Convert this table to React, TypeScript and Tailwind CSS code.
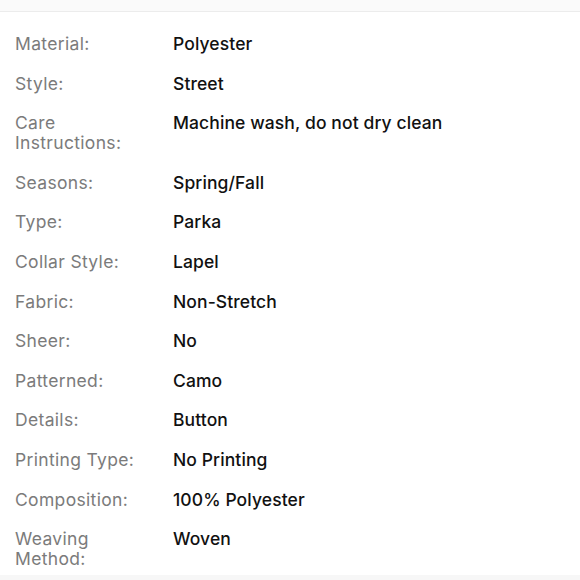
const specs: [string, string][] = [
  ["Material:", "Polyester"],
  ["Style:", "Street"],
  ["Care Instructions:", "Machine wash, do not dry clean"],
  ["Seasons:", "Spring/Fall"],
  ["Type:", "Parka"],
  ["Collar Style:", "Lapel"],
  ["Fabric:", "Non-Stretch"],
  ["Sheer:", "No"],
  ["Patterned:", "Camo"],
  ["Details:", "Button"],
  ["Printing Type:", "No Printing"],
  ["Composition:", "100% Polyester"],
  ["Weaving Method:", "Woven"],
];

export default function App() {
  return (
    <div className="w-[580px] h-[580px] overflow-hidden bg-white font-['Inter',sans-serif] flex flex-col">
      <div className="h-[12px] shrink-0 bg-[#fafafa] border-b border-[#ececec]" />
      <div className="flex-1 px-[15px] pt-[22px]">
        <div className="grid grid-cols-[136px_1fr] gap-x-[22px] gap-y-[19.6px] text-[17.5px] leading-[20px]">
          {specs.map(([label, value]) => (
            <div key={label} className="contents">
              <div className="text-[#7b7b7b] tracking-[0.33px]">{label}</div>
              <div className="text-[#111] font-medium tracking-[0.1px]">{value}</div>
            </div>
          ))}
        </div>
      </div>
      <div className="h-[5px] shrink-0 bg-[#f7f7f7]" />
    </div>
  );
}
